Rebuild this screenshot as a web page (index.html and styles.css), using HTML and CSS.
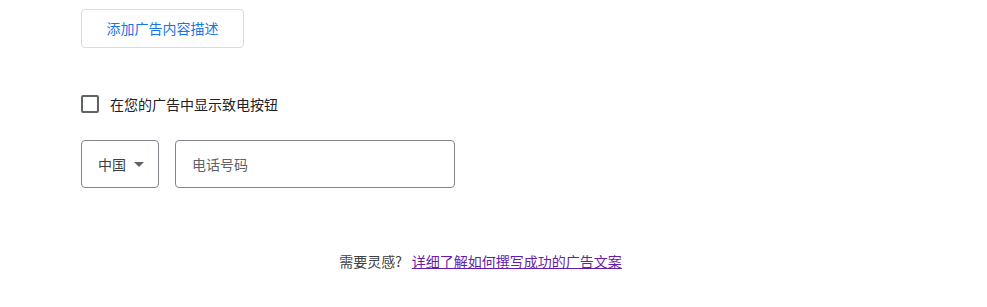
FILE: index.html
```html
<!DOCTYPE html>
<html lang="zh-CN">
<head>
<meta charset="utf-8">
<link rel="stylesheet" href="styles.css">
</head>
<body>
<div class="page">
  <div class="form">
    <button class="add-btn" type="button">添加广告内容描述</button>
    <label class="check-row">
      <span class="checkbox"></span>
      <span class="check-label">在您的广告中显示致电按钮</span>
    </label>
    <div class="phone-row">
      <div class="country">
        <span>中国</span>
        <svg class="caret" width="10" height="5" viewBox="0 0 10 5"><path d="M0 0 L10 0 L5 5 Z" fill="#5f6368"/></svg>
      </div>
      <div class="phone-input">电话号码</div>
    </div>
  </div>
  <div class="footer">
    <span class="need">需要灵感?</span><a class="link" href="#">详细了解如何撰写成功的广告文案</a>
  </div>
</div>
</body>
</html>
```
FILE: styles.css
```css
html, body {
  margin: 0;
  padding: 0;
  background: #ffffff;
}
body {
  font-family: "Noto Sans CJK SC", "Noto Sans", "Liberation Sans", sans-serif;
  font-size: 14px;
  color: #202124;
}
.page {
  width: 987px;
}
.form {
  padding-left: 81px;
  padding-top: 9px;
}
.add-btn {
  display: block;
  box-sizing: border-box;
  width: 163px;
  height: 39px;
  border: 1px solid #dadce0;
  border-radius: 4px;
  background: #fff;
  color: #1a73e8;
  font-family: inherit;
  font-size: 14px;
  padding: 0;
  line-height: 37px;
}
.check-row {
  display: flex;
  align-items: center;
  margin-top: 47px;
  height: 18px;
}
.checkbox {
  box-sizing: border-box;
  width: 18px;
  height: 18px;
  border: 2px solid #5f6368;
  border-radius: 2px;
  flex: none;
}
.check-label {
  margin-left: 11px;
  line-height: 18px;
  color: #202124;
}
.phone-row {
  display: flex;
  margin-top: 27px;
  gap: 16px;
}
.country {
  box-sizing: border-box;
  width: 78px;
  height: 48px;
  border: 1px solid #80868b;
  border-radius: 4px;
  display: flex;
  align-items: center;
  padding-left: 16px;
  color: #3c4043;
}
.caret {
  margin-left: 8px;
  display: block;
}
.phone-input {
  box-sizing: border-box;
  width: 280px;
  height: 48px;
  border: 1px solid #80868b;
  border-radius: 4px;
  display: flex;
  align-items: center;
  padding-left: 16px;
  color: #5f6368;
}
.footer {
  width: 961px;
  text-align: center;
  margin-top: 63px;
  line-height: 20px;
  color: #3c4043;
}
.link {
  margin-left: 10px;
  color: #681da8;
  text-decoration: underline;
}
```
